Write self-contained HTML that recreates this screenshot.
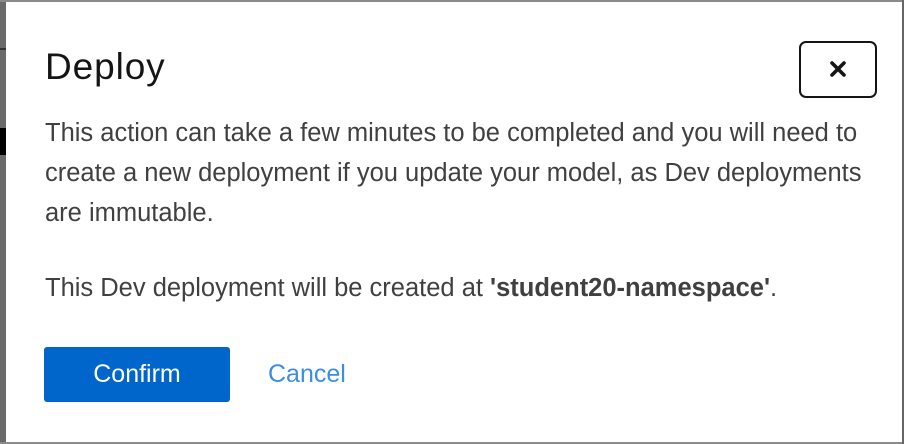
<!DOCTYPE html>
<html><head><meta charset="utf-8"><style>
html,body{margin:0;padding:0;}
body{width:904px;height:444px;position:relative;overflow:hidden;background:#fff;font-family:"Liberation Sans",sans-serif;}
.ls{position:absolute;left:0;top:0;width:6px;height:444px;background:#6a6a6a;}
.ls .b1{position:absolute;left:0;top:48px;width:6px;height:2px;background:#333;}
.ls .b2{position:absolute;left:0;top:128px;width:6px;height:27px;background:#000;}
.top{position:absolute;left:0;top:0;width:904px;height:2px;background:#8a8a8a;}
.bot{position:absolute;left:0;top:442px;width:904px;height:2px;background:#8a8a8a;}
.rt{position:absolute;left:902px;top:0;width:2px;height:444px;background:#666;}
h1{position:absolute;left:45px;top:46px;margin:0;font-weight:normal;font-size:37px;letter-spacing:0.9px;color:#151515;}
.close{position:absolute;left:799px;top:41px;width:74px;height:53px;border:2.5px solid #151515;border-radius:7px;}
.p{position:absolute;left:45px;font-size:25.5px;color:#404040;white-space:nowrap;line-height:40px;}
.btn{position:absolute;left:44px;top:347px;width:186px;height:55px;background:#0066cc;border-radius:3px;color:#fff;font-size:25px;line-height:55px;text-align:center;}
.cancel{position:absolute;left:268px;top:347px;line-height:55px;font-size:25px;color:#3b8ee0;}
</style></head><body>
<div class="ls"><div class="b1"></div><div class="b2"></div></div>
<div class="top"></div><div class="bot"></div><div class="rt"></div>
<h1>Deploy</h1>
<div class="close"><svg width="74" height="53" viewBox="0 0 74 53"><path d="M31 20L43 32M43 20L31 32" stroke="#151515" stroke-width="3.6" stroke-linecap="round"/></svg></div>
<div class="p" style="top:113px">This action can take a few minutes to be completed and you will need to<br>create a new deployment if you update your model, as Dev deployments<br>are immutable.</div>
<div class="p" style="top:268px">This Dev deployment will be created at <b>'student20-namespace'</b>.</div>
<div class="btn">Confirm</div>
<div class="cancel">Cancel</div>
</body></html>
